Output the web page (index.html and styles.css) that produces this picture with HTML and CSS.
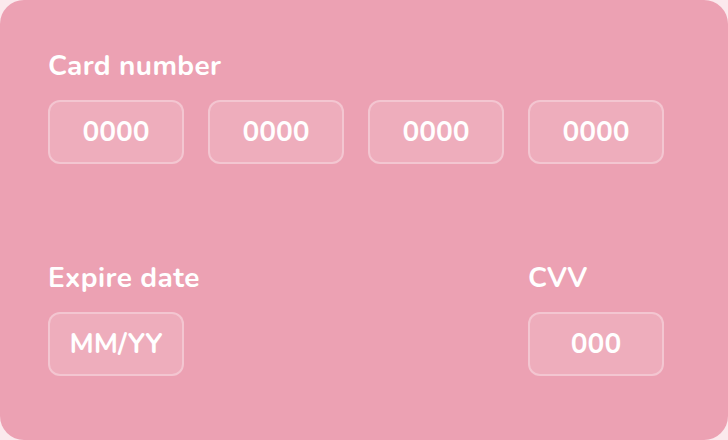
FILE: index.html
```html
<!DOCTYPE html>
<html>
<head>
<meta charset="utf-8">
<link rel="stylesheet" href="styles.css">
</head>
<body>
<div class="card">
  <div class="field">
    <div class="label">Card number</div>
    <div class="row">
      <div class="box">0000</div>
      <div class="box">0000</div>
      <div class="box">0000</div>
      <div class="box">0000</div>
    </div>
  </div>
  <div class="bottom">
    <div class="field">
      <div class="label">Expire date</div>
      <div class="box">MM/YY</div>
    </div>
    <div class="field">
      <div class="label">CVV</div>
      <div class="box">000</div>
    </div>
  </div>
</div>
</body>
</html>
```
FILE: styles.css
```css
html, body {
  margin: 0;
  padding: 0;
  background: #fbe9ed;
}
body {
  width: 728px;
  height: 440px;
  overflow: hidden;
  font-family: "Nunito", "Lato", "Open Sans", sans-serif;
  color: #fff;
}
.card {
  box-sizing: border-box;
  width: 728px;
  height: 440px;
  background: #eca1b3;
  border-radius: 24px;
  padding: 48px 48px 64px 48px;
  display: flex;
  flex-direction: column;
  justify-content: space-between;
}
.label {
  font-size: 28px;
  font-weight: 700;
  line-height: 36px;
  margin-bottom: 16px;
  letter-spacing: 0.4px;
}
.row {
  display: flex;
  gap: 24px;
}
.box {
  box-sizing: border-box;
  width: 136px;
  height: 64px;
  border: 2px solid rgba(255, 255, 255, 0.3);
  background: rgba(255, 255, 255, 0.13);
  border-radius: 12px;
  display: flex;
  align-items: center;
  justify-content: center;
  font-size: 28px;
  font-weight: 700;
}
.bottom {
  display: flex;
  justify-content: space-between;
  padding-right: 16px;
}
```
